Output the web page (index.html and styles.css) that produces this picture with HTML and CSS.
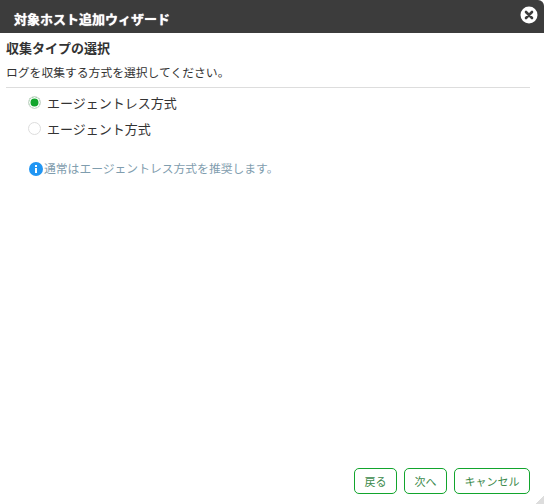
FILE: index.html
```html
<!DOCTYPE html>
<html lang="ja">
<head>
<meta charset="utf-8">
<title>対象ホスト追加ウィザード</title>
<link rel="stylesheet" href="styles.css">
</head>
<body>
<div class="dialog">
  <header class="titlebar">
    <span class="title">対象ホスト追加ウィザード</span>
    <button class="close" aria-label="閉じる">
      <svg viewBox="0 0 18 18" width="18" height="18"><circle cx="9" cy="9" r="8.5" fill="#fff"/><path d="M6 6l6 6M12 6l-6 6" stroke="#3c3c3c" stroke-width="2.6" stroke-linecap="round"/></svg>
    </button>
  </header>
  <main class="content">
    <h2 class="heading">収集タイプの選択</h2>
    <p class="lead">ログを収集する方式を選択してください。</p>
    <div class="options">
      <label class="option"><span class="radio checked"></span>エージェントレス方式</label>
      <label class="option"><span class="radio"></span>エージェント方式</label>
    </div>
    <p class="note">
      <svg class="info" viewBox="0 0 14 14" width="14" height="14"><circle cx="7" cy="7" r="7" fill="#2196f3"/><rect x="6" y="6" width="2" height="5" fill="#fff"/><rect x="6" y="3" width="2" height="2" fill="#fff"/></svg>通常はエージェントレス方式を推奨します。
    </p>
  </main>
  <footer class="actions">
    <button class="btn">戻る</button>
    <button class="btn">次へ</button>
    <button class="btn">キャンセル</button>
  </footer>
  <span class="grip"></span>
</div>
</body>
</html>
```
FILE: styles.css
```css
* { box-sizing: border-box; }
html, body { margin: 0; height: 100%; }
body {
  background: #fff;
  font-family: "Noto Sans CJK JP", "Noto Sans", sans-serif;
  color: #333;
}
.dialog {
  position: relative;
  height: 504px;
  display: flex;
  flex-direction: column;
  background: #fff;
}
.titlebar {
  height: 33px;
  flex: none;
  display: flex;
  align-items: center;
  justify-content: space-between;
  padding: 3px 6px 0 14px;
  background: #3c3c3c;
  border-top-right-radius: 6px;
}
.title {
  color: #fff;
  font-size: 13px;
  font-weight: 700;
  text-shadow: 0 0 1px #fff;
}
.close {
  width: 18px;
  height: 18px;
  padding: 0;
  border: 0;
  background: none;
  display: block;
  margin-top: -6px;
}
.close svg { display: block; }
.content {
  flex: 1;
  padding: 6px 14px 0 6px;
}
.heading {
  margin: 0;
  font-size: 13px;
  line-height: 18px;
  font-weight: 700;
}
.lead {
  margin: 6px 0 0;
  font-size: 11.8px;
  line-height: 18px;
  padding-bottom: 6px;
  border-bottom: 1px solid #ddd;
}
.options {
  padding: 1px 0 0 22px;
}
.option {
  display: flex;
  align-items: center;
  gap: 6px;
  height: 26px;
  font-size: 13px;
}
.radio {
  width: 13px;
  height: 13px;
  margin-top: 1px;
  border: 1px solid #ddd;
  border-radius: 50%;
  background: #fff;
  display: block;
  flex: none;
}
.radio.checked {
  background: #12a52d;
  box-shadow: inset 0 0 0 1.5px #fff;
}
.note {
  margin: 17px 0 0 23px;
  display: flex;
  align-items: center;
  height: 18px;
  font-size: 11.8px;
  color: #7f9dae;
}
.info { flex: none; margin: 3px 1px 0 0; }
.actions {
  flex: none;
  display: flex;
  justify-content: flex-end;
  gap: 7px;
  padding: 0 14px 10px 0;
}
.btn {
  height: 26px;
  padding: 0 9.5px;
  border: 1.5px solid #12a52d;
  border-radius: 5px;
  background: #fff;
  color: #3c8a4c;
  font-family: inherit;
  font-size: 11px;
}
.grip {
  position: absolute;
  right: 0;
  bottom: 0;
  width: 8px;
  height: 8px;
  background: linear-gradient(135deg, transparent 50%, #ddd 50%);
}
```
